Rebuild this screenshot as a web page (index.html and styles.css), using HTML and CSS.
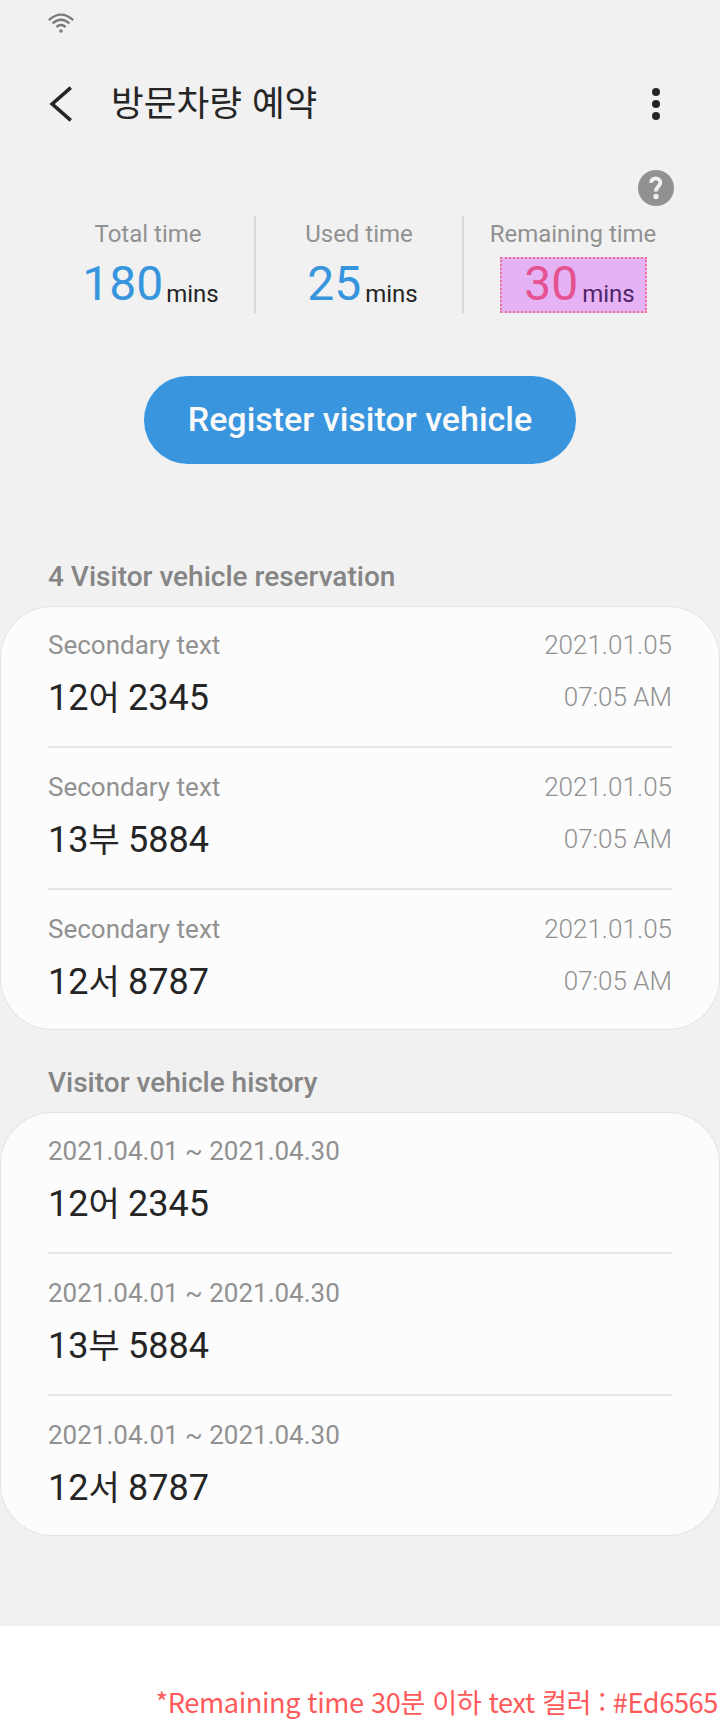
FILE: index.html
```html
<!DOCTYPE html>
<html lang="ko">
<head>
<meta charset="utf-8">
<title>방문차량 예약</title>
<link rel="stylesheet" href="styles.css">
</head>
<body>
<main class="screen">
  <div class="status">
    <svg class="wifi" width="26" height="20" viewBox="0 0 26 20" fill="none" stroke="#7b7b7b" stroke-width="2.3">
      <path d="M.8 7.1Q13-3.9 25.2 7.1"/><path d="M4.6 10.4Q13 3.1 21.4 10.4"/><path d="M8.4 14Q13 10.1 17.6 14"/><circle cx="13" cy="18" r="1.8" fill="#7b7b7b" stroke="none"/>
    </svg>
  </div>
  <header class="appbar">
    <svg class="back" width="24" height="38" viewBox="0 0 24 38" fill="none" stroke="#252525" stroke-width="3.6"><path d="M22.8 2.6 4.2 19 22.8 35.4"/></svg>
    <h1 class="title">방문차량 예약</h1>
    <svg class="more" width="8" height="32" viewBox="0 0 8 32" fill="#252525"><circle cx="4" cy="4" r="4"/><circle cx="4" cy="16" r="4"/><circle cx="4" cy="28" r="4"/></svg>
  </header>
  <div class="help">
    <svg width="36" height="36" viewBox="0 0 36 36"><circle cx="18" cy="18" r="18" fill="#919191"/><path d="M13.1 12.7C13.1 6.9 22.3 6.9 22.3 12.8C22.3 16.6 17.8 16.8 17.8 21.6" fill="none" stroke="#f1f1f1" stroke-width="3.9"/><circle cx="18" cy="26.5" r="2.7" fill="#f1f1f1"/></svg>
  </div>
  <section class="stats">
    <div class="stat"><div class="label">Total time</div><div class="value total"><span class="num">180</span><span class="unit">mins</span></div></div>
    <div class="stat"><div class="label">Used time</div><div class="value"><span class="num">25</span><span class="unit">mins</span></div></div>
    <div class="stat"><div class="label">Remaining time</div><div class="value marked"><span class="num">30</span><span class="unit">mins</span></div></div>
  </section>
  <button class="register">Register visitor vehicle</button>
  <h2 class="heading first">4 Visitor vehicle reservation</h2>
  <ul class="card">
    <li class="item"><div class="main"><span class="sub">Secondary text</span><span class="plate">12<span class="ko">어</span> 2345</span></div><div class="when"><span>2021.01.05</span><span>07:05 AM</span></div></li>
    <li class="item"><div class="main"><span class="sub">Secondary text</span><span class="plate">13<span class="ko">부</span> 5884</span></div><div class="when"><span>2021.01.05</span><span>07:05 AM</span></div></li>
    <li class="item"><div class="main"><span class="sub">Secondary text</span><span class="plate">12<span class="ko">서</span> 8787</span></div><div class="when"><span>2021.01.05</span><span>07:05 AM</span></div></li>
  </ul>
  <h2 class="heading">Visitor vehicle history</h2>
  <ul class="card">
    <li class="item"><div class="main"><span class="sub">2021.04.01 ~ 2021.04.30</span><span class="plate">12<span class="ko">어</span> 2345</span></div></li>
    <li class="item"><div class="main"><span class="sub">2021.04.01 ~ 2021.04.30</span><span class="plate">13<span class="ko">부</span> 5884</span></div></li>
    <li class="item"><div class="main"><span class="sub">2021.04.01 ~ 2021.04.30</span><span class="plate">12<span class="ko">서</span> 8787</span></div></li>
  </ul>
</main>
<p class="note">*Remaining time 30분 이하 text 컬러 : #Ed6565</p>
</body>
</html>
```
FILE: styles.css
```css
* { box-sizing: border-box; margin: 0; padding: 0; }
body { width: 720px; height: 1720px; overflow: hidden; background: #fff; font-family: Roboto, "Noto Sans CJK KR", sans-serif; color: #252525; }
.screen { height: 1626px; background: #f1f1f1; }
.status { height: 48px; padding: 13px 48px 0; }
.wifi { display: block; }
.appbar { height: 112px; display: flex; align-items: center; padding: 0 60px 0 48px; }
.title { flex: 1; margin-left: 39px; padding-bottom: 7px; font: 400 35.6px/48px "Noto Sans CJK KR", sans-serif; }
.help { height: 56px; padding: 10px 46px 0 0; display: flex; justify-content: flex-end; }
.help svg { display: block; }
.stats { display: grid; grid-template-columns: 212px 208px 220px; padding-left: 42px; height: 96px; }
.stat + .stat { border-left: 2px solid #d9d9d9; }
.stat { display: flex; flex-direction: column; align-items: center; }
.label { height: 41px; padding-top: 4px; font-size: 24px; line-height: 28px; color: #919191; }
.value { width: 147px; height: 56px; display: flex; align-items: baseline; justify-content: center; padding-left: 7px; gap: 4px; line-height: 54px; }
.total { padding-left: 5px; gap: 3px; }
.num { font-size: 48px; color: #3695dd; }
.unit { font-size: 24px; position: relative; top: 2px; }
.marked { background: #e5b3f5; outline: 2px dotted #f0708f; outline-offset: -2px; padding-left: 13px; }
.marked .num { color: #e4528f; }
.marked .unit { color: #4f2468; }
.register { display: block; width: 432px; height: 88px; margin: 64px auto 0; padding-bottom: 2px; border: 0; border-radius: 44px; background: #3895de; color: #fafafa; font: 500 34px/40px Roboto, sans-serif; }
.heading { height: 82px; padding: 36px 48px 0; font-size: 28px; line-height: 34px; font-weight: 500; color: #858585; }
.heading.first { height: 142px; padding-top: 96px; }
.card { height: 424px; list-style: none; background: #fcfcfc; border-radius: 52px; box-shadow: inset 0 0 0 1px #e3e3e3; padding: 0 48px; }
.item { height: 142px; display: flex; justify-content: space-between; border-bottom: 2px solid #e5e5e5; padding-top: 23px; }
.item:last-child { border-bottom: 0; }
.main, .when { display: flex; flex-direction: column; }
.sub { font-size: 26px; line-height: 32px; color: #919191; }
.plate { font-size: 36px; line-height: 44px; margin-top: 15px; word-spacing: -.6px; }
.ko { font-size: 34px; }
.when { align-items: flex-end; gap: 20px; font-size: 26px; line-height: 32px; font-weight: 300; color: #919191; }
.note { margin-top: 55px; padding-right: 2px; text-align: right; white-space: nowrap; font: 400 27.2px/40px "Noto Sans CJK KR", sans-serif; letter-spacing: -.4px; color: #ff5a5a; }
```
